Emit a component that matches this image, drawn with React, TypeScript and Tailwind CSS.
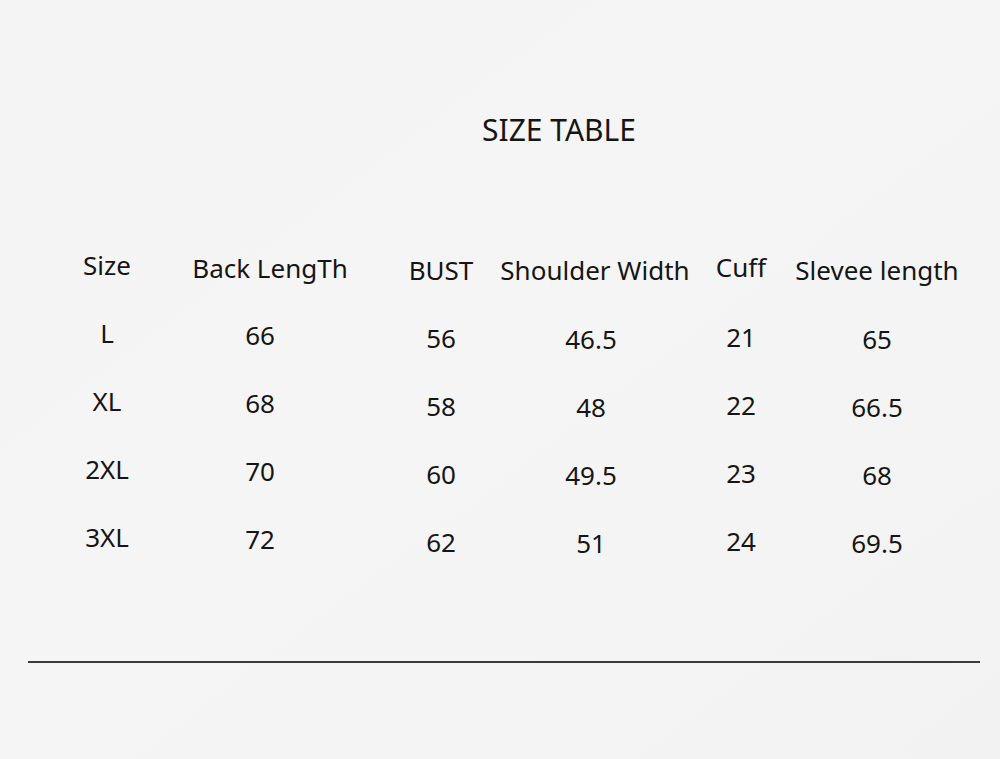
import React from 'react';

type Cell = { text: string; cls?: string };

const columns = ['w-[80px]', 'w-[226px]', 'w-[136px]', 'w-[164px]', 'w-[136px]', 'w-[136px]'];

const header: Cell[] = [
  { text: 'Size', cls: '-translate-y-[3px]' },
  { text: 'Back LengTh', cls: 'pl-[20px]' },
  { text: 'BUST', cls: 'translate-y-[2px]' },
  { text: 'Shoulder Width', cls: 'pl-[8px] translate-y-[2px]' },
  { text: 'Cuff', cls: '-translate-y-[1px]' },
  { text: 'Slevee length', cls: 'translate-y-[2px]' },
];

const rows: string[][] = [
  ['L', '66', '56', '46.5', '21', '65'],
  ['XL', '68', '58', '48', '22', '66.5'],
  ['2XL', '70', '60', '49.5', '23', '68'],
  ['3XL', '72', '62', '51', '24', '69.5'],
];

// small vertical drift per column, as in the printed table
const colShift = [
  '-translate-y-[3px]',
  '-translate-y-[1px]',
  'translate-y-[2px]',
  'translate-y-[3px]',
  'translate-y-[1px]',
  'translate-y-[3px]',
];

function Row({ cells }: { cells: Cell[] }) {
  return (
    <div className="flex h-[68px] items-center">
      {cells.map((c, i) => (
        <div key={i} className={`${columns[i]} flex justify-center`}>
          <span className={`whitespace-nowrap ${c.cls ?? ''}`}>{c.text}</span>
        </div>
      ))}
    </div>
  );
}

export default function App() {
  return (
    <div
      className="w-[1000px] h-[759px] overflow-hidden bg-gradient-to-br from-[#f4f4f4] via-[#f5f5f5] to-[#f2f2f2] text-[#151515]"
      style={{ fontFamily: '"Noto Sans", "Open Sans", sans-serif' }}
    >
      <div className="flex justify-center pl-[118px] pt-[110px]">
        <h1 className="text-[30px] leading-[40px] font-normal">SIZE TABLE</h1>
      </div>

      <div className="mt-[84px] pl-[67px] text-[26px] leading-[32px]">
        <Row cells={header} />
        {rows.map((r, ri) => (
          <Row key={ri} cells={r.map((t, i) => ({ text: t, cls: colShift[i] }))} />
        ))}
      </div>

      <div className="mt-[87px] ml-[28px] mr-[20px] h-[2px] bg-[#3a3a3a]" />
    </div>
  );
}
